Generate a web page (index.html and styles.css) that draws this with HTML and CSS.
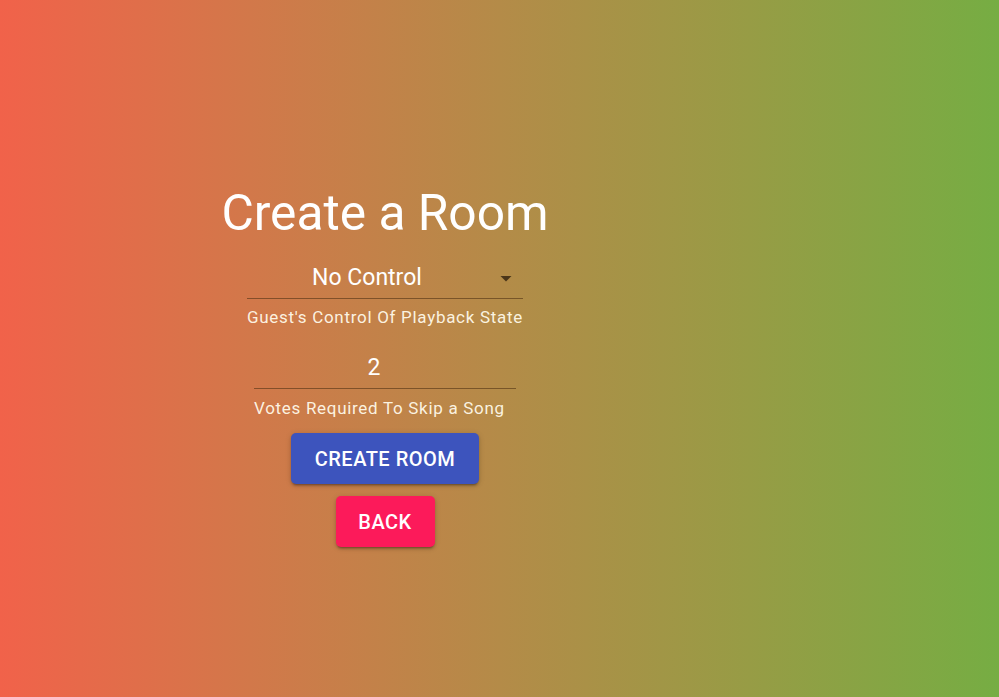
FILE: index.html
```html
<!DOCTYPE html>
<html lang="en">
<head>
<meta charset="utf-8">
<title>Create a Room</title>
<link rel="stylesheet" href="styles.css">
</head>
<body>
<main class="page">
  <section class="panel">
    <h1 class="title">Create a Room</h1>
    <div class="field field-select">
      <div class="control">
        <span class="value">No Control</span>
        <svg class="arrow" width="24" height="24" viewBox="0 0 24 24"><path d="M6.5 10l5.5 5.5 5.5-5.5z"/></svg>
      </div>
      <p class="helper">Guest's Control Of Playback State</p>
    </div>
    <div class="field field-text">
      <div class="control">
        <span class="value">2</span>
      </div>
      <p class="helper">Votes Required To Skip a Song</p>
    </div>
    <button class="btn btn-primary">Create Room</button>
    <button class="btn btn-secondary">Back</button>
  </section>
</main>
</body>
</html>
```

FILE: styles.css
```css
html, body {
  margin: 0;
  height: 100%;
}
body {
  font-family: Roboto, "Liberation Sans", sans-serif;
  background: linear-gradient(90deg, #f1624a 0%, #d2784a 25%, #b48b48 50%, #979c45 75%, #76ad43 100%);
  color: #fff;
}
.page {
  height: 697px;
  width: 770px;
  display: flex;
  justify-content: center;
}
.panel {
  display: flex;
  flex-direction: column;
  align-items: center;
  padding-top: 183px;
}
.title {
  margin: 0;
  font-size: 49.7px;
  font-weight: 400;
  line-height: 60px;
  color: #fff;
}
.field {
  display: flex;
  flex-direction: column;
  align-items: flex-start;
}
.field-select {
  width: 276px;
  margin-top: 12px;
}
.field-text {
  width: 262px;
  margin-top: 17px;
}
.control {
  position: relative;
  width: 100%;
  height: 44px;
  padding-top: 2px;
  display: flex;
  align-items: center;
  justify-content: center;
  border-bottom: 1.5px solid rgba(80, 50, 20, 0.6);
  box-sizing: border-box;
}
.value {
  font-size: 23px;
  color: #fff;
}
.field-select .value {
  margin-right: 36px;
}
.field-text .value {
  margin-right: 22px;
}
.arrow {
  position: absolute;
  right: 5px;
  top: 11px;
  fill: rgba(40, 25, 10, 0.75);
}
.helper {
  margin: 7px 0 0;
  font-size: 17px;
  letter-spacing: 0.7px;
  line-height: 22px;
  color: rgba(255, 250, 235, 0.95);
}
.field-text .helper {
  margin-top: 8px;
}
.btn {
  border: none;
  border-radius: 5px;
  font-family: Roboto, "Liberation Sans", sans-serif;
  font-size: 20px;
  font-weight: 500;
  letter-spacing: 0.5px;
  text-transform: uppercase;
  color: #fff;
  height: 51px;
  padding: 0;
  box-shadow: 0 3px 2px -2px rgba(0,0,0,0.25), 0 2px 3px 0 rgba(0,0,0,0.16), 0 1px 6px 0 rgba(0,0,0,0.14);
}
.btn-primary {
  background: #3d54bd;
  width: 188px;
  margin-top: 14px;
}
.btn-secondary {
  background: #fc1a5a;
  width: 99px;
  margin-top: 12px;
}
```
